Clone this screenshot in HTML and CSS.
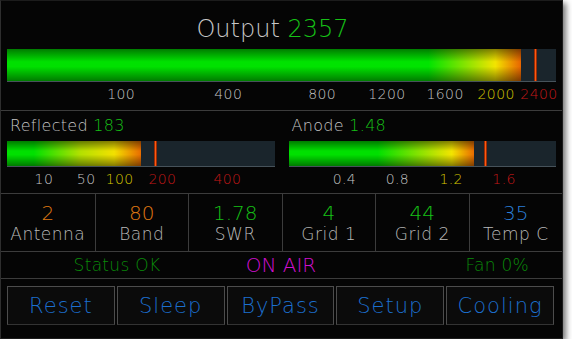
FILE: index.html
```html
<!DOCTYPE html>
<html lang="en">
<head>
  <meta charset="UTF-8" />
  <title>Amplifier Panel</title>
  <link rel="stylesheet" href="styles.css">
</head>
<body>

  <div class="panel">

    <section class="output">
      <h1 class="title">Output <span class="green">2357</span></h1>
      <div class="track track-big">
        <div class="fill fill-out" style="width:93.6%"></div>
        <div class="peak" style="left:96.2%"></div>
      </div>
      <div class="scale scale-big">
        <span style="left:20.8%">100</span>
        <span style="left:40.3%">400</span>
        <span style="left:57.4%">800</span>
        <span style="left:69.2%">1200</span>
        <span style="left:79.8%">1600</span>
        <span class="warn" style="left:89.1%">2000</span>
        <span class="bad" style="left:96.9%">2400</span>
      </div>
    </section>

    <section class="meters">
      <div class="meter">
        <div class="meter-label">Reflected <span class="green">183</span></div>
        <div class="track">
          <div class="fill fill-ref" style="width:50.2%"></div>
          <div class="peak" style="left:55.4%"></div>
        </div>
        <div class="scale">
          <span style="left:13.8%">10</span>
          <span style="left:29.6%">50</span>
          <span class="warn" style="left:42.1%">100</span>
          <span class="bad" style="left:58.1%">200</span>
          <span class="bad" style="left:82.4%">400</span>
        </div>
      </div>
      <div class="meter">
        <div class="meter-label">Anode <span class="green">1.48</span></div>
        <div class="track">
          <div class="fill fill-anode" style="width:69.4%"></div>
          <div class="peak" style="left:73.5%"></div>
        </div>
        <div class="scale">
          <span style="left:20.9%">0.4</span>
          <span style="left:40.7%">0.8</span>
          <span class="warn" style="left:60.8%">1.2</span>
          <span class="bad" style="left:80.6%">1.6</span>
        </div>
      </div>
    </section>

    <section class="stats">
      <div class="stat"><div class="stat-val orange">2</div><div class="stat-name">Antenna</div></div>
      <div class="stat"><div class="stat-val orange">80</div><div class="stat-name">Band</div></div>
      <div class="stat"><div class="stat-val green">1.78</div><div class="stat-name">SWR</div></div>
      <div class="stat"><div class="stat-val green">4</div><div class="stat-name">Grid 1</div></div>
      <div class="stat"><div class="stat-val green">44</div><div class="stat-name">Grid 2</div></div>
      <div class="stat"><div class="stat-val blue">35</div><div class="stat-name">Temp C</div></div>
    </section>

    <section class="status">
      <div class="status-ok">Status OK</div>
      <div class="on-air">ON AIR</div>
      <div class="fan">Fan 0%</div>
    </section>

    <section class="buttons">
      <button class="btn">Reset</button>
      <button class="btn">Sleep</button>
      <button class="btn">ByPass</button>
      <button class="btn">Setup</button>
      <button class="btn">Cooling</button>
    </section>

  </div>

</body>
</html>
```

FILE: styles.css
```css
* { box-sizing: border-box; margin: 0; padding: 0; }

body {
  font-family: 'DejaVu Sans', 'Liberation Sans', sans-serif;
  font-weight: 300;
  background: #ffffff;
  color: #c4c4c4;
}

.panel {
  width: 563px;
  height: 339px;
  background: #050505;
  border: 1px solid #1c1c1c;
  border-left-color: #2e2e2e;
  box-shadow: 3px 3px 6px rgba(0, 0, 0, 0.55);
}

.green { color: #16c016; }
.orange { color: #e07a12; }
.blue { color: #2a7fd8; }
.warn { color: #d6c800; }
.bad { color: #c41818; }

/* output meter */
.output {
  padding: 14px 6px 0;
  border-bottom: 1px solid #3c3c3c;
}

.title {
  font-size: 24px;
  font-weight: 300;
  line-height: 28px;
  text-align: center;
  padding-right: 18px;
  margin-bottom: 6px;
  color: #c8c8c8;
}

.track {
  position: relative;
  height: 26px;
  background: #1a252c;
  border-bottom: 1px solid #46525a;
}

.track-big { height: 33px; }

.fill {
  height: 100%;
}

.fill-out {
  background:
    linear-gradient(to bottom, rgba(0,0,0,0.45), rgba(0,0,0,0) 40%, rgba(0,0,0,0) 55%, rgba(0,0,0,0.45)),
    linear-gradient(to right, #00e000, #00e400 82%, #f2e400 95%, #e86400);
}

.fill-ref {
  background:
    linear-gradient(to bottom, rgba(0,0,0,0.45), rgba(0,0,0,0) 40%, rgba(0,0,0,0) 55%, rgba(0,0,0,0.45)),
    linear-gradient(to right, #00e000, #00e000 20%, #b4e000 55%, #f2e000 80%, #e86c00);
}

.fill-anode {
  background:
    linear-gradient(to bottom, rgba(0,0,0,0.45), rgba(0,0,0,0) 40%, rgba(0,0,0,0) 55%, rgba(0,0,0,0.45)),
    linear-gradient(to right, #00e000, #00e000 48%, #f2e400 88%, #e86c00);
}

.peak {
  position: absolute;
  top: 0;
  bottom: 0;
  width: 3px;
  margin-left: -1px;
  background: linear-gradient(to right, #6a1400, #ff5a10, #6a1400);
}

.scale {
  position: relative;
  height: 26px;
  font-size: 14px;
  line-height: 16px;
  letter-spacing: 0.4px;
}

.scale-big { height: 28px; }

.scale span {
  position: absolute;
  top: 4px;
  transform: translateX(-50%);
  white-space: nowrap;
}

/* reflected + anode */
.meters {
  display: grid;
  grid-template-columns: 1fr 1fr;
  gap: 14px;
  padding: 6px 6px 0;
  border-bottom: 1px solid #3c3c3c;
}

.meter-label {
  font-size: 16px;
  line-height: 18px;
  letter-spacing: 0.3px;
  padding-left: 3px;
  margin-bottom: 6px;
}

/* stat cells */
.stats {
  display: grid;
  grid-template-columns: repeat(6, 1fr);
  border-bottom: 1px solid #3c3c3c;
}

.stat {
  text-align: center;
  padding: 9px 0 8px;
  border-left: 1px solid #3c3c3c;
}

.stat:first-child { border-left: none; }

.stat-val {
  font-size: 20px;
  line-height: 20px;
  margin-bottom: 2px;
}

.stat-name {
  font-size: 17px;
  line-height: 18px;
  letter-spacing: 0.5px;
  color: #b8b8b8;
}

/* status line */
.status {
  display: grid;
  grid-template-columns: 232px 96px 1fr;
  align-items: center;
  height: 27px;
  border-bottom: 1px solid #3c3c3c;
  line-height: 26px;
}

.status-ok, .fan {
  font-size: 17px;
  letter-spacing: 0.3px;
  color: #0a8a0a;
  justify-self: center;
  white-space: nowrap;
}

.fan {
  justify-self: end;
  padding-right: 33px;
}

.on-air {
  font-size: 20px;
  color: #d010d0;
  justify-self: center;
  white-space: nowrap;
}

/* buttons */
.buttons {
  display: grid;
  grid-template-columns: repeat(5, 1fr);
  gap: 2px;
  padding: 7px 8px 0 6px;
}

.btn {
  height: 39px;
  background: #0b0b0b;
  border: 1px solid #4c4c4c;
  border-bottom-color: #333;
  color: #1c6fcf;
  font-family: inherit;
  font-weight: 300;
  font-size: 21px;
  letter-spacing: 1px;
  cursor: pointer;
}

.btn:hover { background: #151515; }
```
